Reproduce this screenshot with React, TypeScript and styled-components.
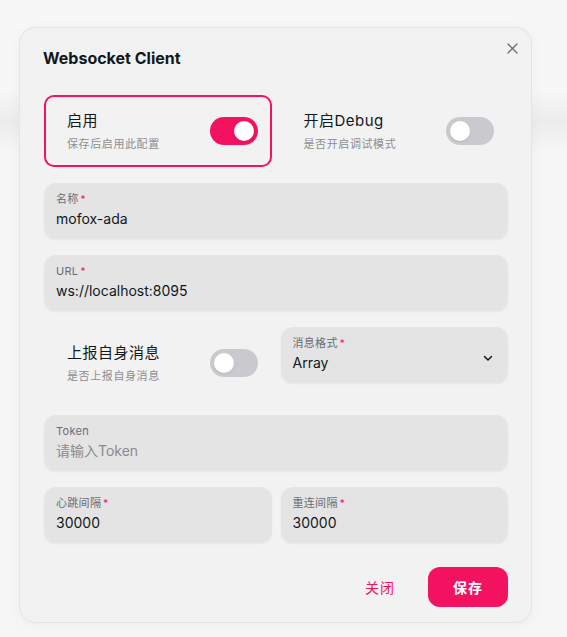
import React from 'react';
import styled, { createGlobalStyle } from 'styled-components';

const GlobalStyle = createGlobalStyle`
  html, body {
    margin: 0;
    padding: 0;
    background: #f6f6f6;
    font-family: Inter, 'Noto Sans CJK SC', sans-serif;
  }
  * { box-sizing: border-box; }
`;

const Page = styled.div`
  width: 567px;
  height: 637px;
  padding: 27px 0 0 19px;
  background: linear-gradient(180deg, #f7f7f7 0%, #f7f7f7 14%, #ececec 19%, #f6f6f6 24%, #f6f6f6 100%);
`;

const Modal = styled.div`
  position: relative;
  width: 513px;
  background: #f2f2f2;
  border: 1px solid #e4e4e4;
  border-radius: 16px;
  box-shadow: 0 2px 14px rgba(0, 0, 0, 0.04);
`;

const Header = styled.div`
  padding: 16px 24px 15px 23px;
  font-size: 16px;
  font-weight: 700;
  line-height: 28px;
  color: #11181c;
`;

const CloseButton = styled.button`
  position: absolute;
  top: 11px;
  right: 10px;
  width: 18px;
  height: 18px;
  padding: 0;
  border: none;
  background: transparent;
  color: #71717a;
  display: flex;
  align-items: center;
  justify-content: center;
`;

const Body = styled.div`
  padding: 8px 23px 0 24px;
  display: flex;
  flex-direction: column;
  gap: 16px;
`;

const Row = styled.div`
  display: grid;
  grid-template-columns: 1fr 1fr;
  column-gap: 9px;
  align-items: start;
`;

const SwitchCard = styled.div<{ active?: boolean }>`
  height: 72px;
  border: 2px solid ${({ active }) => (active ? '#f31260' : 'transparent')};
  border-radius: 10px;
  padding: 0 12px 0 21px;
  display: flex;
  align-items: center;
  justify-content: space-between;
`;

const SwitchText = styled.div`
  display: flex;
  flex-direction: column;
  gap: 4px;
`;

const SwitchTitle = styled.div`
  font-size: 15px;
  line-height: 22px;
  color: #11181c;
  letter-spacing: 0.5px;
`;

const SwitchDesc = styled.div`
  font-size: 11px;
  line-height: 16px;
  color: #8e8e93;
  letter-spacing: 0.6px;
`;

const Track = styled.div<{ on?: boolean }>`
  width: 48px;
  height: 28px;
  border-radius: 14px;
  background: ${({ on }) => (on ? '#f31260' : '#cac9ce')};
  padding: 4px;
  display: flex;
  justify-content: ${({ on }) => (on ? 'flex-end' : 'flex-start')};
`;

const Knob = styled.div`
  width: 20px;
  height: 20px;
  border-radius: 50%;
  background: #ffffff;
  box-shadow: 0 1px 2px rgba(0, 0, 0, 0.1);
`;

const Field = styled.div`
  position: relative;
  height: 56px;
  border-radius: 12px;
  background: #e4e4e4;
  box-shadow: 0 1px 2px rgba(0, 0, 0, 0.05);
  padding: 8px 13px 0 12px;
  display: flex;
  flex-direction: column;
  gap: 2px;
`;

const Label = styled.div`
  font-size: 11px;
  line-height: 16px;
  color: #6b6b72;
  letter-spacing: 0.3px;
`;

const Required = styled.span`
  color: #f31260;
  margin-left: 2px;
  font-size: 10px;
`;

const Value = styled.div<{ placeholder?: boolean }>`
  font-size: 14px;
  line-height: 20px;
  color: ${({ placeholder }) => (placeholder ? '#8a8a90' : '#11181c')};
`;

const Chevron = styled.div`
  position: absolute;
  right: 14px;
  top: 21px;
  width: 12px;
  height: 12px;
  color: #11181c;
`;

const Footer = styled.div`
  display: flex;
  justify-content: flex-end;
  gap: 8px;
  padding: 24px 23px 15px 24px;
`;

const Button = styled.button<{ primary?: boolean }>`
  width: 80px;
  height: 40px;
  border: none;
  border-radius: 12px;
  font-family: Inter, 'Noto Sans CJK SC', sans-serif;
  font-size: 14px;
  font-weight: ${({ primary }) => (primary ? 700 : 400)};
  background: ${({ primary }) => (primary ? '#f31260' : 'transparent')};
  color: ${({ primary }) => (primary ? '#ffffff' : '#f31260')};
  letter-spacing: 1px;
`;

const Switch = ({ on }: { on?: boolean }) => (
  <Track on={on}>
    <Knob />
  </Track>
);

const InputField = ({
  label,
  value,
  required,
  placeholder,
}: {
  label: string;
  value: string;
  required?: boolean;
  placeholder?: boolean;
}) => (
  <Field>
    <Label>
      {label}
      {required && <Required>*</Required>}
    </Label>
    <Value placeholder={placeholder}>{value}</Value>
  </Field>
);

const App = () => {
  return (
    <>
      <GlobalStyle />
      <Page>
        <Modal>
          <CloseButton>
            <svg width="11" height="11" viewBox="0 0 11 11" fill="none">
              <path d="M1 1L10 10M10 1L1 10" stroke="currentColor" strokeWidth="1.4" strokeLinecap="round" />
            </svg>
          </CloseButton>
          <Header>Websocket Client</Header>
          <Body>
            <Row>
              <SwitchCard active>
                <SwitchText>
                  <SwitchTitle>启用</SwitchTitle>
                  <SwitchDesc>保存后启用此配置</SwitchDesc>
                </SwitchText>
                <Switch on />
              </SwitchCard>
              <SwitchCard>
                <SwitchText>
                  <SwitchTitle>开启Debug</SwitchTitle>
                  <SwitchDesc>是否开启调试模式</SwitchDesc>
                </SwitchText>
                <Switch />
              </SwitchCard>
            </Row>
            <InputField label="名称" value="mofox-ada" required />
            <InputField label="URL" value="ws://localhost:8095" required />
            <Row>
              <SwitchCard>
                <SwitchText>
                  <SwitchTitle>上报自身消息</SwitchTitle>
                  <SwitchDesc>是否上报自身消息</SwitchDesc>
                </SwitchText>
                <Switch />
              </SwitchCard>
              <Field>
                <Label>
                  消息格式<Required>*</Required>
                </Label>
                <Value>Array</Value>
                <Chevron>
                  <svg width="12" height="12" viewBox="0 0 12 12" fill="none">
                    <path d="M2.5 4.5L6 8L9.5 4.5" stroke="currentColor" strokeWidth="1.5" strokeLinecap="round" strokeLinejoin="round" />
                  </svg>
                </Chevron>
              </Field>
            </Row>
            <InputField label="Token" value="请输入Token" placeholder />
            <Row>
              <InputField label="心跳间隔" value="30000" required />
              <InputField label="重连间隔" value="30000" required />
            </Row>
          </Body>
          <Footer>
            <Button>关闭</Button>
            <Button primary>保存</Button>
          </Footer>
        </Modal>
      </Page>
    </>
  );
};

export default App;
